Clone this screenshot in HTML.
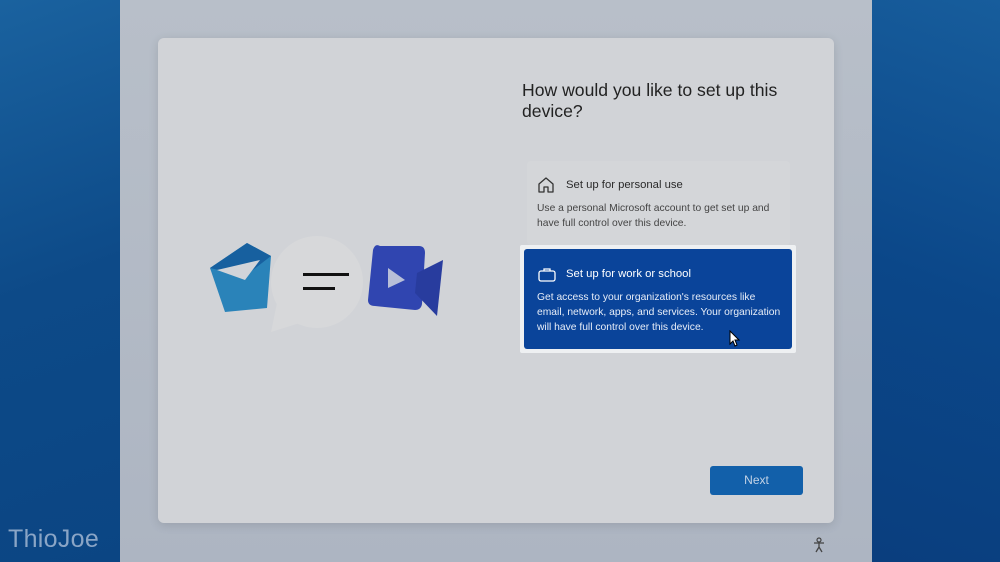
<!DOCTYPE html>
<html><head><meta charset="utf-8"><style>
*{margin:0;padding:0;box-sizing:border-box}
body{width:1000px;height:562px;overflow:hidden;position:relative;font-family:"Liberation Sans",sans-serif;background:#b9c1cc}
.l{position:absolute;left:0;top:0;width:120px;height:562px;background:linear-gradient(160deg,#1a629f,#0d4a88 50%,#0b4583)}
.r{position:absolute;right:0;top:0;width:128px;height:562px;background:linear-gradient(200deg,#175d9c,#0b4789 50%,#0a3e7e)}
.mid{position:absolute;left:120px;top:0;width:752px;height:562px;background:linear-gradient(180deg,#b8bfc9,#adb5c2)}
.card{position:absolute;left:158px;top:38px;width:676px;height:485px;background:#d1d3d7;border-radius:6px;box-shadow:0 2px 10px rgba(0,0,0,.12)}
h1{position:absolute;left:522px;top:80px;font-size:17.6px;font-weight:normal;color:#222;line-height:21px;width:290px}
.p{position:absolute;left:527px;top:161px;width:263px;height:84px;background:#d4d6d9;border-radius:4px}
.p .t{position:absolute;left:39px;top:18px;font-size:11.3px;color:#2a2a2a}
.p .d{position:absolute;left:10px;top:40px;font-size:10.3px;line-height:15px;color:#444;width:255px}
.w{position:absolute;left:520px;top:245px;width:276px;height:108px;background:#eef0f2;border-radius:2px}
.wi{position:absolute;left:4px;top:4px;width:268px;height:100px;background:#0a449a;border-radius:3px}
.wi .t{position:absolute;left:42px;top:19px;font-size:11.3px;color:#fff}
.wi .d{position:absolute;left:13px;top:41px;font-size:10.3px;line-height:15px;color:#e8eef8;width:245px}
.btn{position:absolute;left:710px;top:466px;width:93px;height:29px;background:#1260aa;border-radius:3px;color:#c3d3e6;font-size:12px;text-align:center;line-height:29px}
.wm{position:absolute;left:8px;top:525px;font-size:25px;color:#8aa5c6;letter-spacing:.3px}
</style></head><body>
<div class="l"></div><div class="mid"></div><div class="r"></div>
<div class="card"></div>
<svg style="position:absolute;left:205px;top:228px" width="250" height="110" viewBox="0 0 250 110">
<path d="M5 40 L42 15 L66 28 L62 80 L20 84 Z" fill="#2a83b9"/>
<path d="M5 40 L42 15 L66 28 L40 48 Z" fill="#17609f"/>
<path d="M12 42 L55 32 L40 52 Z" fill="#d1d4d9"/>
<path d="M175 18 Q170 15 168 22 L163 72 Q163 78 170 78 L210 82 Q216 82 217 76 L220 25 Q220 18 214 18 Z" fill="#3045b0"/>
<path d="M212 45 L238 32 L232 88 L210 65 Z" fill="#283c9e"/>
<path d="M183 40 L200 52 L183 60 Z" fill="#b8bfd8"/>
<circle cx="112" cy="54" r="46" fill="#d7d8da"/>
<path d="M72 75 L66 104 L98 94 Z" fill="#d7d8da"/>
<rect x="98" y="45" width="46" height="3" fill="#111"/><rect x="98" y="59" width="32" height="3" fill="#111"/>
</svg>
<h1>How would you like to set up this device?</h1>
<div class="p">
<svg style="position:absolute;left:10px;top:15px" width="18" height="18" viewBox="0 0 18 18"><path d="M2 8 L9 2 L16 8 V16 H11 V11 H7 V16 H2 Z" fill="none" stroke="#333" stroke-width="1.3" stroke-linejoin="round"/></svg>
<div class="t">Set up for personal use</div>
<div class="d">Use a personal Microsoft account to get set up and have full control over this device.</div></div>
<div class="w"><div class="wi">
<svg style="position:absolute;left:14px;top:18px" width="18" height="16" viewBox="0 0 18 16"><rect x="1" y="4" width="16" height="10" rx="2" fill="none" stroke="#fff" stroke-width="1.3"/><path d="M6 4 V2 H12 V4" fill="none" stroke="#fff" stroke-width="1.3"/></svg>
<div class="t">Set up for work or school</div>
<div class="d">Get access to your organization's resources like email, network, apps, and services. Your organization will have full control over this device.</div>
<svg style="position:absolute;left:205px;top:81px" width="12" height="17" viewBox="0 0 12 17"><path d="M1 1 L1 14 L4 11 L6 16 L8 15 L6 10 L10 10 Z" fill="#fff" stroke="#000" stroke-width="1"/></svg>
</div></div>
<div class="btn">Next</div>
<svg style="position:absolute;left:812px;top:537px" width="14" height="16" viewBox="0 0 14 16"><circle cx="7" cy="3" r="2" fill="none" stroke="#444" stroke-width="1.2"/><path d="M2 6 H12 M7 6 V10 M4 15 L7 10 L10 15" fill="none" stroke="#444" stroke-width="1.3"/></svg>
<div class="wm">ThioJoe</div>
</body></html>
